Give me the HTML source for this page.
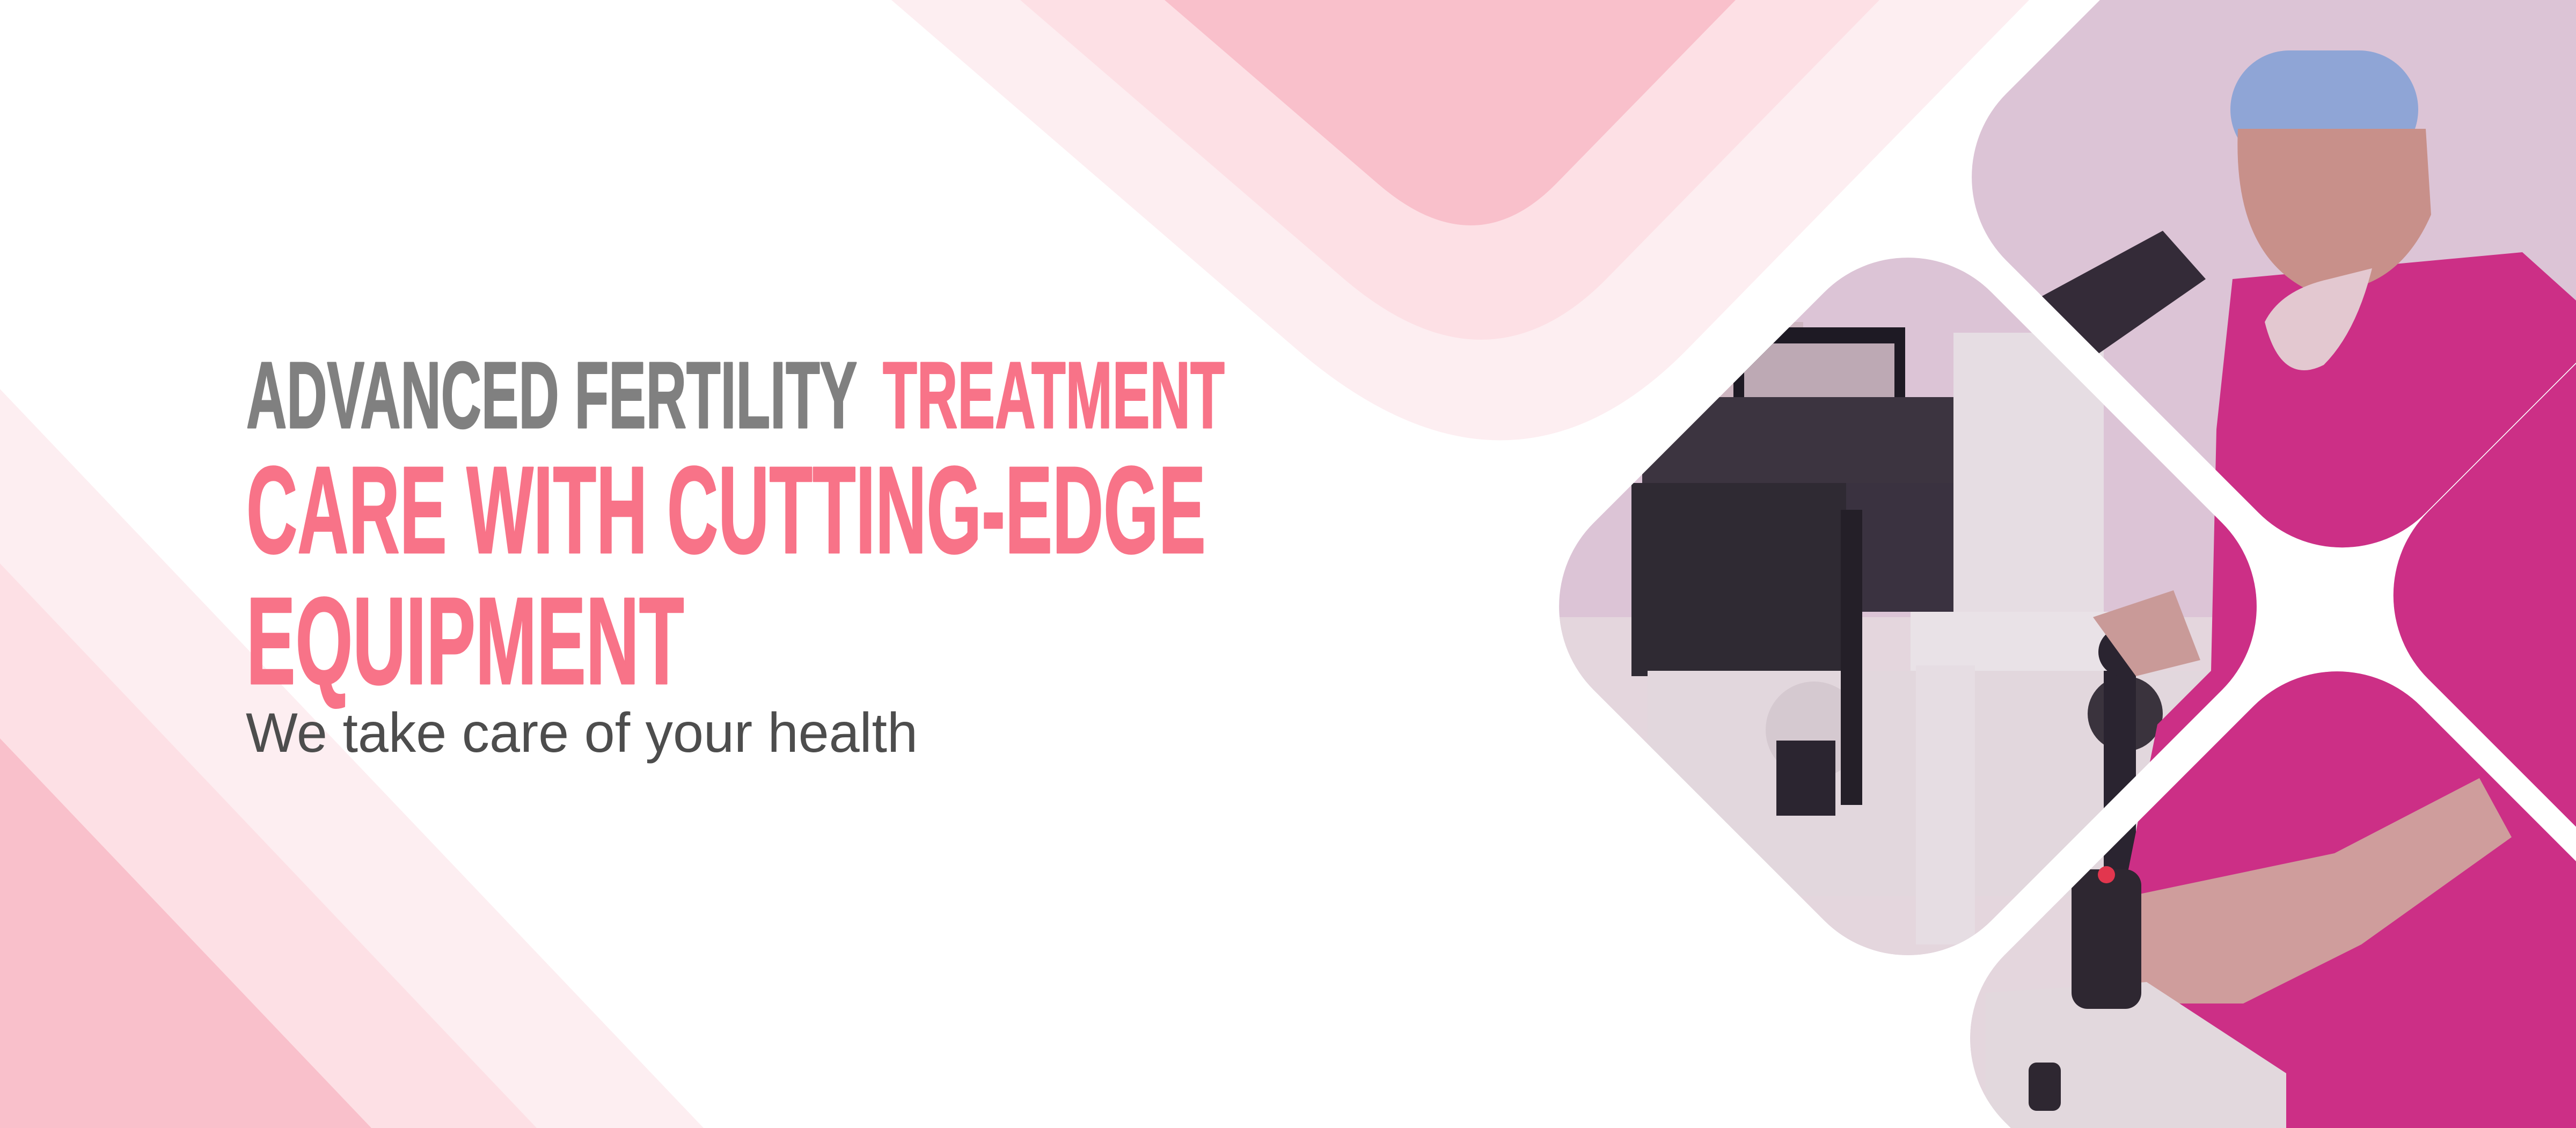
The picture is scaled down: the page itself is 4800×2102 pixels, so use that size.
<!DOCTYPE html>
<html><head><meta charset="utf-8"><style>
html,body{margin:0;padding:0;background:#fff;}
body{width:4800px;height:2102px;overflow:hidden;}
svg{display:block;}
</style></head><body>
<svg width="4800" height="2102" viewBox="0 0 4800 2102" xmlns="http://www.w3.org/2000/svg">
<defs>
<clipPath id="dia">
<rect x="3031" y="606" width="1048" height="1048" rx="220" transform="rotate(45 3555 1130)"/>
<rect x="3812" y="-222" width="1105" height="1105" rx="220" transform="rotate(45 4365 330)"/>
<rect x="4597" y="557" width="1105" height="1105" rx="220" transform="rotate(45 5150 1110)"/>
<rect x="3807" y="1387" width="1096" height="1096" rx="220" transform="rotate(45 4355 1935)"/>
</clipPath>
</defs>
<path d="M1661,0 L3781,0 L3145,650 Q2811,991 2415,650 Z" fill="#fdeef1"/>
<path d="M1901,0 L3502,0 L2996,517 Q2770,749 2501,517 Z" fill="#fde0e5"/>
<path d="M2170,0 L3234,0 L2900,342 Q2747,498 2567,342 Z" fill="#f9c0cb"/>
<path d="M0,725 L1311,2102 L0,2102 Z" fill="#fdeef1"/>
<path d="M0,1050 L1000,2102 L0,2102 Z" fill="#fde0e5"/>
<path d="M0,1376 L692,2102 L0,2102 Z" fill="#f9c0cb"/>
<g font-family="'Liberation Sans', sans-serif" font-weight="bold" stroke-width="3" stroke-linejoin="round">
<text transform="translate(459,797) scale(0.592,1)" x="0" y="0" font-size="176" fill="#808080" stroke="#808080">ADVANCED FERTILITY</text>
<text transform="translate(1645,797) scale(0.594,1)" x="0" y="0" font-size="176" fill="#f87388" stroke="#f87388">TREATMENT</text>
<text transform="translate(459,1030) scale(0.571,1)" x="0" y="0" font-size="231" fill="#f87388" stroke="#f87388">CARE WITH CUTTING-EDGE</text>
<text transform="translate(459,1274) scale(0.594,1)" x="0" y="0" font-size="231" fill="#f87388" stroke="#f87388">EQUIPMENT</text>
</g>
<text transform="translate(458,1401) scale(0.986,1)" x="0" y="0" font-family="'Liberation Sans', sans-serif" font-size="104" fill="#4d4d4d">We take care of your health</text>
<g clip-path="url(#dia)">
<rect x="2850" y="0" width="1950" height="2102" fill="#dcc4d6"/>
<rect x="2850" y="1150" width="1400" height="952" fill="#e4d6dd"/>
<rect x="3100" y="600" width="260" height="260" fill="#cdb5c0"/>
<rect x="3230" y="610" width="320" height="200" fill="#1e1a24"/>
<rect x="3250" y="640" width="280" height="120" fill="#bda9b4"/>
<rect x="3060" y="740" width="620" height="160" fill="#3c3440"/>
<rect x="3040" y="900" width="400" height="360" fill="#2f2a33"/>
<rect x="3440" y="900" width="200" height="240" fill="#3a3240"/>
<rect x="3640" y="620" width="280" height="560" fill="#e6dde3"/>
<rect x="3070" y="1250" width="1150" height="420" fill="#e2d7dd"/>
<rect x="3560" y="1140" width="460" height="110" fill="#e9e2e7"/>
<rect x="3570" y="1240" width="110" height="520" fill="#e6dde3"/>
<circle cx="3380" cy="1360" r="90" fill="#d5c9d0"/>
<rect x="3310" y="1380" width="110" height="140" fill="#2b2530"/>
<rect x="3430" y="950" width="40" height="550" fill="#241f28"/>
<circle cx="3960" cy="1330" r="70" fill="#3a333d"/>
<rect x="3920" y="1250" width="60" height="400" fill="#2a2430"/>
<circle cx="3955" cy="1215" r="45" fill="#2a2430"/>
<path d="M3900,1150 L4050,1100 L4100,1230 L3980,1260 Z" fill="#c99a98"/>
<path d="M4160,520 L4700,470 L4800,560 L4800,2102 L4100,2102 L3950,1700 L4020,1350 L4120,1250 L4130,800 Z" fill="#cc2f86"/>
<rect x="4156" y="94" width="350" height="220" rx="110" fill="#8fa5d6"/>
<path d="M4170,240 Q4160,470 4300,540 Q4460,560 4530,400 L4520,240 Z" fill="#c8908a"/>
<path d="M4220,600 Q4250,540 4340,520 L4420,500 Q4390,620 4330,680 Q4250,720 4220,600 Z" fill="#e3c8d0"/>
<path d="M3790,560 L4030,430 L4110,520 L3880,680 Z" fill="#342b38"/>
<path d="M3920,1680 L4350,1590 L4620,1450 L4680,1560 L4400,1760 L4180,1870 L4000,1870 Z" fill="#cf9d9c"/>
<path d="M3700,1850 L4000,1830 L4260,2000 L4260,2102 L3700,2102 Z" fill="#e2d8dd"/>
<rect x="3860" y="1620" width="130" height="260" rx="30" fill="#2e2731"/>
<circle cx="3925" cy="1630" r="16" fill="#e2364e"/>
<rect x="3780" y="1980" width="60" height="90" rx="15" fill="#2e2731"/>
</g>
</svg>
</body></html>
